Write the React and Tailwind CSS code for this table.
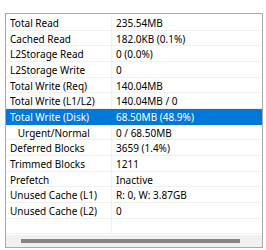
import React from 'react';

const rows = [
  ['Total Read', '235.54MB'],
  ['Cached Read', '182.0KB (0.1%)'],
  ['L2Storage Read', '0 (0.0%)'],
  ['L2Storage Write', '0'],
  ['Total Write (Req)', '140.04MB'],
  ['Total Write (L1/L2)', '140.04MB / 0'],
  ['Total Write (Disk)', '68.50MB (48.9%)', true],
  ['   Urgent/Normal', '0 / 68.50MB'],
  ['Deferred Blocks', '3659 (1.4%)'],
  ['Trimmed Blocks', '1211'],
  ['Prefetch', 'Inactive'],
  ['Unused Cache (L1)', 'R: 0, W: 3.87GB'],
  ['Unused Cache (L2)', '0'],
  ['', ''],
];

function Row({ label, value, selected }) {
  return (
    <div className={`flex h-[15.66px] ${selected ? 'bg-[#0078d7] text-white' : 'text-black'}`}>
      <div className={`w-[106px] shrink-0 pl-[4px] pt-[1px] leading-[14px] whitespace-pre border-b ${selected ? 'border-[#0078d7]' : 'border-r border-[#f0f0f0]'}`}>
        {label}
      </div>
      <div className={`flex-1 pl-[4px] pt-[1px] leading-[14px] whitespace-pre border-b ${selected ? 'border-[#0078d7]' : 'border-[#f0f0f0]'}`}>
        {value}
      </div>
    </div>
  );
}

export default function App() {
  return (
    <div className="w-[266px] h-[250px] bg-white pl-[5px] pt-[13px]" style={{ fontFamily: '"Noto Sans", sans-serif' }}>
      <div className="w-[258px] h-[235px] border border-[#a9a9a9] flex flex-col text-[10px] overflow-hidden">
        <div className="flex-1 pt-[1px]">
          {rows.map(([label, value, selected], i) => (
            <Row key={i} label={label} value={value} selected={selected} />
          ))}
        </div>
        <div className="h-[12px] bg-[#f0f0f0] flex items-center pl-[15px] pr-[22px]">
          <div className="h-[4px] w-full bg-[#858585]" />
        </div>
      </div>
    </div>
  );
}
